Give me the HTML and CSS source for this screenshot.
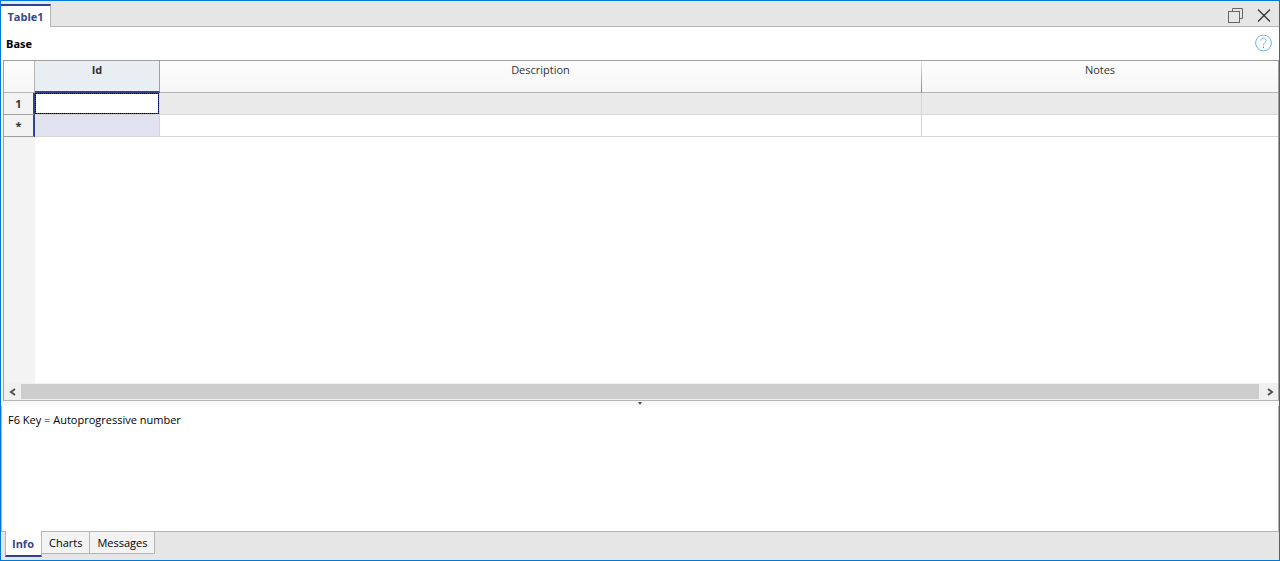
FILE: index.html
```html
<!DOCTYPE html>
<html lang="en">
<head>
    <meta charset="UTF-8">
    <meta name="viewport" content="width=device-width, initial-scale=1.0">
    <title>Table1</title>
    <link rel="stylesheet" href="styles.css">
</head>
<body>
    <div class="window">
        <header class="titlebar">
            <button type="button" class="doc-tab">Table1</button>
            <div class="window-buttons">
                <button type="button" class="icon-button" aria-label="Restore">
                    <svg width="16" height="16" viewBox="0 0 16 16" fill="none" stroke="#666">
                        <path d="M4.500 3.500V0.500H14.500V10.500H11.500"/>
                        <rect x="0.500" y="3.500" width="11" height="11"/>
                    </svg>
                </button>
                <button type="button" class="icon-button" aria-label="Close">
                    <svg width="16" height="16" viewBox="0 0 16 16" fill="none" stroke="#333" stroke-width="1.300">
                        <path d="M2 1.500L14 13.500M14 1.500L2 13.500"/>
                    </svg>
                </button>
            </div>
        </header>

        <div class="view-bar">
            <h1 class="view-name">Base</h1>
            <button type="button" class="icon-button" aria-label="Help">
                <svg width="18" height="18" viewBox="0 0 18 18" fill="none" stroke="#6db3e2">
                    <circle cx="8.500" cy="8" r="7.900"/>
                    <path d="M5.800 5.700C5.800 2.400 11.200 2.400 11.200 5.500C11.200 7.700 8.500 7.600 8.500 10.300"/>
                    <path d="M8.500 11.500V13" stroke="#3f94d0"/>
                </svg>
            </button>
        </div>

        <main class="grid">
            <table class="sheet">
                <colgroup>
                    <col class="col-row">
                    <col class="col-id">
                    <col class="col-description">
                    <col>
                </colgroup>
                <thead>
                    <tr>
                        <td class="corner"></td>
                        <th scope="col" class="selected" id="col-id">Id</th>
                        <th scope="col" class="faded">Description</th>
                        <th scope="col">Notes</th>
                    </tr>
                </thead>
                <tbody>
                    <tr class="current">
                        <th scope="row">1</th>
                        <td><input type="text" class="cell-input" aria-labelledby="col-id"></td>
                        <td></td>
                        <td></td>
                    </tr>
                    <tr>
                        <th scope="row">*</th>
                        <td class="in-column"></td>
                        <td></td>
                        <td></td>
                    </tr>
                </tbody>
            </table>
            <div class="row-gutter"></div>
            <div class="scrollbar">
                <button type="button" class="scroll-arrow" aria-label="Scroll left">
                    <svg width="8" height="8" viewBox="0 0 8 8" fill="none" stroke="#505050" stroke-width="2"><path d="M6 1L2 4L6 7"/></svg>
                </button>
                <div class="scroll-thumb"></div>
                <button type="button" class="scroll-arrow" aria-label="Scroll right">
                    <svg width="8" height="8" viewBox="0 0 8 8" fill="none" stroke="#505050" stroke-width="2"><path d="M2 1L6 4L2 7"/></svg>
                </button>
            </div>
        </main>

        <div class="splitter">
            <svg width="4" height="3" viewBox="0 0 4 3"><path d="M0 0H4L2 3Z" fill="#555"/></svg>
        </div>

        <section class="info">F6 Key = Autoprogressive number</section>

        <footer class="panel-tabs">
            <button type="button" class="panel-tab active">Info</button>
            <button type="button" class="panel-tab">Charts</button>
            <button type="button" class="panel-tab">Messages</button>
        </footer>
    </div>
</body>
</html>
```

FILE: styles.css
```css
* {
    box-sizing: border-box;
}
body {
    margin: 0;
    font-family: "Open Sans", "Noto Sans", sans-serif;
    font-size: 11px;
    line-height: 16px;
    color: #000;
}
button {
    font: inherit;
    margin: 0;
    padding: 0;
    border: none;
    background: none;
}
svg {
    display: block;
}
.window {
    display: flex;
    flex-direction: column;
    height: 100vh;
    border: 1px solid #0078d7;
    background-color: #fff;
}

/* title bar */
.titlebar {
    display: flex;
    justify-content: space-between;
    height: 26px;
    padding-top: 3px;
    background: linear-gradient(#b5b5b5, #b5b5b5) bottom / 100% 1px no-repeat #e6e6e6;
}
.doc-tab {
    width: 50px;
    border-top: 2px solid #2f4395;
    border-right: 1px solid #b5b5b5;
    background-color: #fff;
    color: #35478f;
    font-weight: 700;
}
.window-buttons {
    display: flex;
    align-items: center;
    gap: 12px;
    padding-right: 7px;
}
.view-bar {
    display: flex;
    align-items: center;
    justify-content: space-between;
    height: 33px;
    padding: 0 6px 0 5px;
}
.view-name {
    margin: 0;
    font-size: 11px;
    font-weight: 700;
}

/* data grid */
.grid {
    flex: 1;
    display: flex;
    flex-direction: column;
    margin-left: 2px;
    border: 1px solid #a0a0a0;
    border-bottom-color: #b5b5b5;
}
.sheet {
    width: 100%;
    table-layout: fixed;
    border-collapse: separate;
    border-spacing: 0;
}
.col-row {
    width: 31px;
}
.col-id {
    width: 125px;
}
.col-description {
    width: 762px;
}
.sheet td,
.sheet th {
    height: 22px;
    padding: 0;
    border-right: 1px solid #d6d6d6;
    border-bottom: 1px solid #d6d6d6;
}
.sheet td:last-child,
.sheet th:last-child {
    border-right: none;
}
.sheet thead th,
.sheet .corner {
    height: 32px;
    padding-top: 1px;
    border-bottom-color: #b5b5b5;
    border-right-color: #a0a0a0;
    background: linear-gradient(#fdfdfd, #f6f6f6);
    color: #333;
    font-weight: 400;
    vertical-align: top;
}
.sheet .corner {
    border-right-color: #b5b5b5;
}
.sheet thead .faded {
    border-right-color: transparent;
    background:
        linear-gradient(#e6e6e6, #808080) right / 1px 100% no-repeat border-box,
        linear-gradient(#fdfdfd, #f6f6f6);
}
.sheet thead .selected {
    border-bottom: 2px solid #2f4395;
    background: #e8eef2;
    font-weight: 700;
}
.sheet tbody th {
    border-right: 2px solid #2f4395;
    border-bottom-color: #a0a0a0;
    background-color: #f3f3f3;
    color: #333;
}
.current td {
    background-color: #eaeaea;
}
.sheet .in-column {
    background-color: #e1e3f0;
}
.cell-input {
    display: block;
    width: 100%;
    height: 21px;
    padding: 0 3px;
    border: 1px dotted #000;
    border-radius: 0;
    outline: none;
    background: linear-gradient(#fff, #fff) padding-box, #2f4395 border-box;
    font: inherit;
}
.row-gutter {
    flex: 1;
    width: 31px;
    background-color: #f3f3f3;
}
.scrollbar {
    display: flex;
    height: 17px;
    padding: 1px 0;
    background-color: #f0f0f0;
}
.scroll-arrow {
    display: flex;
    align-items: center;
    justify-content: center;
    width: 17px;
}
.scroll-thumb {
    flex: 1;
    margin-right: 2px;
    background-color: #cdcdcd;
}

/* info panel */
.splitter {
    display: flex;
    justify-content: center;
    height: 5px;
    padding-top: 1px;
    background-color: #f9f9f9;
}
.info {
    height: 126px;
    padding: 6px;
    border: 1px solid #b5b5b5;
    border-top: none;
}
.panel-tabs {
    display: flex;
    align-items: flex-start;
    height: 28px;
    padding-left: 4px;
    background-color: #e6e6e6;
}
.panel-tab {
    height: 22px;
    padding: 0 7px;
    border: 1px solid #b5b5b5;
    border-top: none;
    border-left: none;
    background-color: #f3f3f3;
}
.panel-tab.active {
    height: 26px;
    margin-top: -1px;
    padding: 2px 7px 0 6px;
    border-left: 1px solid #b5b5b5;
    border-bottom: 2px solid #2f4395;
    background-color: #fff;
    color: #35478f;
    font-weight: 700;
}
```
